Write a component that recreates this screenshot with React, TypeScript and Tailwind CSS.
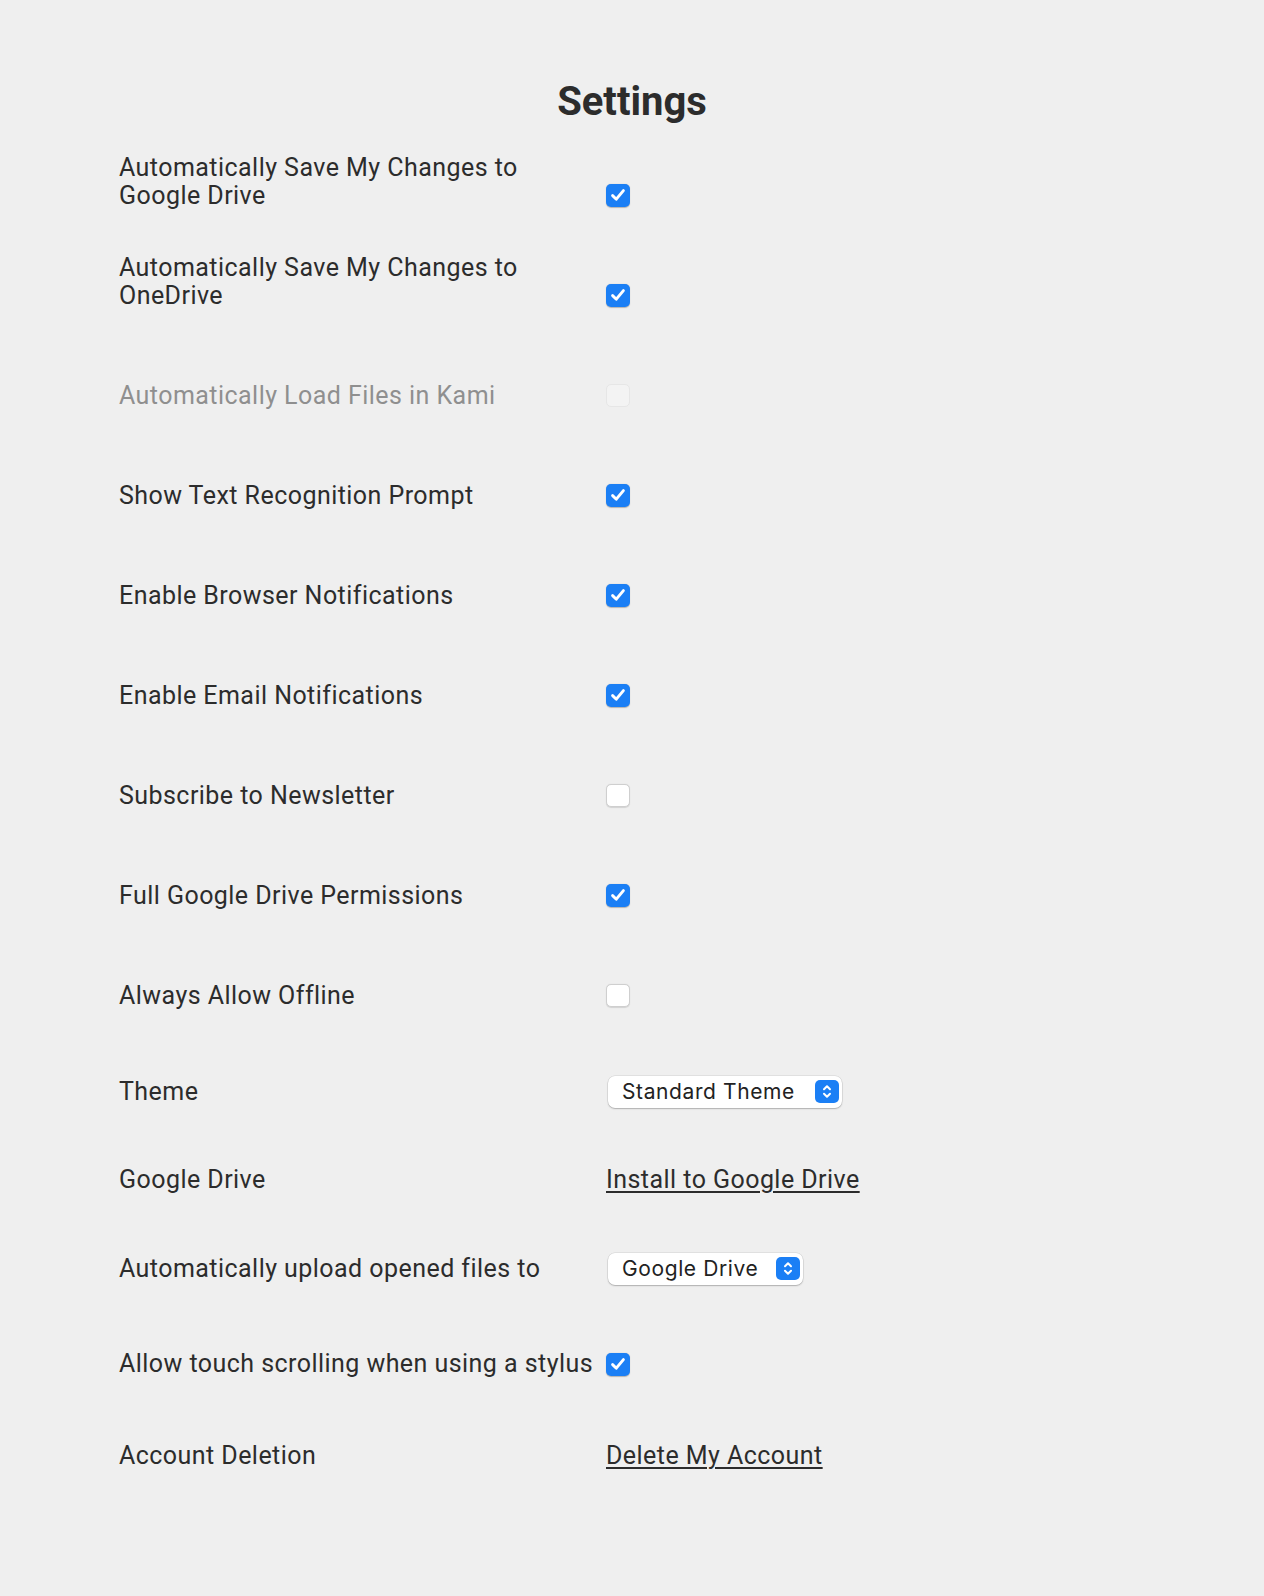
import React from "react";

function CheckBox({ state }: { state: "on" | "off" | "disabled" }) {
  if (state === "on") {
    return (
      <div className="w-[24px] h-[23px] rounded-[5px] bg-[#1b7ff5] flex items-center justify-center shadow-[0_0.5px_1px_rgba(0,0,0,0.25)]">
        <svg width="18" height="18" viewBox="0 0 18 18" fill="none">
          <path d="M3.6 9.6 L7.3 13.2 L14.4 4.6" stroke="white" strokeWidth="2.9" strokeLinecap="round" strokeLinejoin="round" />
        </svg>
      </div>
    );
  }
  if (state === "off") {
    return (
      <div className="w-[24px] h-[23px] rounded-[5px] bg-white border border-[#cfcfcf] shadow-[0_0.5px_1px_rgba(0,0,0,0.12)]" />
    );
  }
  return <div className="w-[24px] h-[23px] rounded-[5px] bg-[#f3f3f3] border border-[#e6e6e6]" />;
}

function Stepper() {
  return (
    <div className="w-[24px] h-[23px] rounded-[5px] bg-[#1b7ff5] flex items-center justify-center">
      <svg width="12" height="17" viewBox="0 0 12 17" fill="none">
        <path d="M3 6.2 L6 3.2 L9 6.2" stroke="white" strokeWidth="2" strokeLinecap="round" strokeLinejoin="round" />
        <path d="M3 10.8 L6 13.8 L9 10.8" stroke="white" strokeWidth="2" strokeLinecap="round" strokeLinejoin="round" />
      </svg>
    </div>
  );
}

function Select({ text, width }: { text: string; width: string }) {
  return (
    <div
      className={`${width} h-[32px] rounded-[7px] bg-white flex items-center justify-between pl-[14px] pr-[3px] shadow-[0_0_0_0.5px_rgba(0,0,0,0.12),0_1px_1.5px_rgba(0,0,0,0.22)] text-[21px] text-[#222] tracking-[0.6px]`}
      style={{ fontFamily: "Inter, 'Liberation Sans', sans-serif" }}
    >
      <span>{text}</span>
      <Stepper />
    </div>
  );
}

const checkRows: { label: string[]; state: "on" | "off" | "disabled" }[] = [
  { label: ["Automatically Save My Changes to", "Google Drive"], state: "on" },
  { label: ["Automatically Save My Changes to", "OneDrive"], state: "on" },
  { label: ["Automatically Load Files in Kami"], state: "disabled" },
  { label: ["Show Text Recognition Prompt"], state: "on" },
  { label: ["Enable Browser Notifications"], state: "on" },
  { label: ["Enable Email Notifications"], state: "on" },
  { label: ["Subscribe to Newsletter"], state: "off" },
  { label: ["Full Google Drive Permissions"], state: "on" },
  { label: ["Always Allow Offline"], state: "off" },
];

export default function App() {
  return (
    <div
      className="w-[1264px] min-h-[1596px] bg-[#efefef] text-[#2c2c2c]"
      style={{ fontFamily: "Roboto, 'Noto Sans', sans-serif" }}
    >
      <div className="pt-[78px]">
        <h1 className="text-center text-[40px] leading-[48px] font-bold text-[#2c2c2c] h-[67px]">Settings</h1>
      </div>
      <div className="pl-[119px] text-[25px] leading-[27.5px] tracking-[0.45px]">
        {checkRows.map((r, i) => (
          <div key={i} className="h-[100px] flex items-end pb-[36px]">
            <div className={`w-[487px] shrink-0 ${r.state === "disabled" ? "text-[#8f8f8f]" : ""}`}>
              {r.label.map((l, j) => (
                <div key={j}>{l}</div>
              ))}
            </div>
            <div className="h-[28px] flex items-center">
              <CheckBox state={r.state} />
            </div>
          </div>
        ))}
        <div className="h-[93px] flex items-center">
          <div className="w-[487px] shrink-0">Theme</div>
          <div className="pl-[2px]">
            <Select text="Standard Theme" width="w-[234px]" />
          </div>
        </div>
        <div className="h-[83px] flex items-center">
          <div className="w-[487px] shrink-0">Google Drive</div>
          <a className="underline underline-offset-[3px] decoration-[1.5px]" href="#">Install to Google Drive</a>
        </div>
        <div className="h-[95px] flex items-center">
          <div className="w-[487px] shrink-0">Automatically upload opened files to</div>
          <div className="pl-[2px]">
            <Select text="Google Drive" width="w-[195px]" />
          </div>
        </div>
        <div className="h-[96px] flex items-center">
          <div className="w-[487px] shrink-0 whitespace-nowrap">Allow touch scrolling when using a stylus</div>
          <CheckBox state="on" />
        </div>
        <div className="h-[88px] flex items-center">
          <div className="w-[487px] shrink-0">Account Deletion</div>
          <a className="underline underline-offset-[3px] decoration-[1.5px]" href="#">Delete My Account</a>
        </div>
      </div>
    </div>
  );
}
